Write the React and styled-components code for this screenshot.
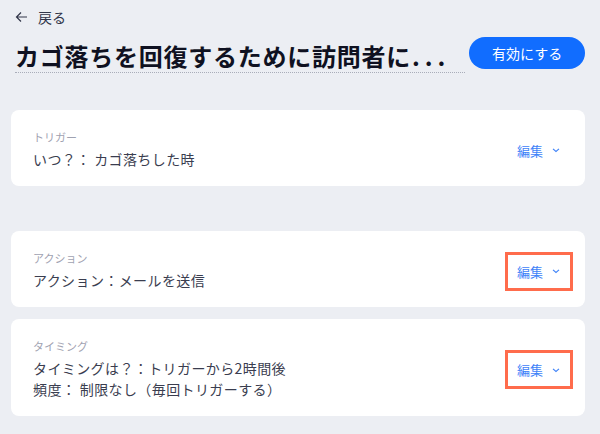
import React from "react";
import styled, { createGlobalStyle } from "styled-components";

const GlobalStyle = createGlobalStyle`
  html, body {
    margin: 0;
    padding: 0;
    background: #eceef3;
  }
  body {
    font-family: "Noto Sans CJK JP", "Noto Sans", sans-serif;
    color: #32364a;
  }
`;

const Page = styled.div`
  width: 600px;
  height: 434px;
  box-sizing: border-box;
  padding: 0 15px 0 11px;
  background: #eceef3;
  overflow: hidden;
`;

const Header = styled.header`
  padding-left: 4px;
`;

const BackLink = styled.a`
  display: inline-flex;
  align-items: center;
  gap: 10px;
  margin-top: 7px;
  height: 20px;
  font-size: 14px;
  color: #32364a;
  text-decoration: none;
  cursor: pointer;
`;

const TitleRow = styled.div`
  display: flex;
  align-items: flex-start;
  gap: 4px;
  margin-top: 9px;
`;

const Title = styled.h1`
  width: 451px;
  margin: 4px 0 0;
  padding-bottom: 1px;
  font-size: 24px;
  line-height: 30px;
  font-weight: 700;
  letter-spacing: 0.75px;
  color: #0f1121;
  white-space: nowrap;
  border-bottom: 1px dotted #a9adb9;
`;

const Dots = styled.span`
  letter-spacing: 5px;
  margin-left: 1px;
`;

const PrimaryButton = styled.button`
  width: 116px;
  height: 32px;
  border: none;
  border-radius: 16px;
  background: #116dff;
  color: #ffffff;
  font-family: inherit;
  font-size: 14px;
  cursor: pointer;
`;

const Section = styled.section`
  display: flex;
  flex-direction: column;
  gap: 12px;
  margin-top: ${(p) => p.$top}px;
`;

const Card = styled.div`
  display: flex;
  align-items: center;
  justify-content: space-between;
  background: #ffffff;
  border-radius: 8px;
  padding: 20px 15px 16px 22px;
`;

const Label = styled.div`
  font-size: 11px;
  line-height: 15px;
  color: #9fa2b1;
`;

const Lines = styled.div`
  margin-top: 4px;
`;

const Line = styled.div`
  font-size: 14px;
  line-height: 21px;
  letter-spacing: 0.4px;
  color: #3a3d4f;
`;

const EditButton = styled.button`
  display: flex;
  align-items: center;
  gap: 8px;
  height: 33px;
  padding: 0 9px;
  border: none;
  background: transparent;
  color: #3f83f8;
  font-family: inherit;
  font-size: 13px;
  cursor: pointer;
  outline: ${(p) => (p.$highlight ? "3px solid #ff6c4c" : "none")};
`;

const ArrowLeft = () => (
  <svg width="13" height="12" viewBox="0 0 13 12" fill="none">
    <path d="M12 6H1.5M6 1.5L1.5 6L6 10.5" stroke="#32364a" strokeWidth="1.2" />
  </svg>
);

const Chevron = () => (
  <svg width="10" height="10" viewBox="0 0 10 10" fill="none">
    <path d="M2 3.8L5 6.5L8 3.8" stroke="#3f83f8" strokeWidth="1.1" />
  </svg>
);

const StepCard = ({ label, lines, highlight }) => (
  <Card>
    <div>
      <Label>{label}</Label>
      <Lines>
        {lines.map((l) => (
          <Line key={l}>{l}</Line>
        ))}
      </Lines>
    </div>
    <EditButton $highlight={highlight}>
      編集
      <Chevron />
    </EditButton>
  </Card>
);

export default function App() {
  return (
    <>
      <GlobalStyle />
      <Page>
        <Header>
          <BackLink>
            <ArrowLeft />
            戻る
          </BackLink>
          <TitleRow>
            <Title>
              カゴ落ちを回復するために訪問者に<Dots>...</Dots>
            </Title>
            <PrimaryButton>有効にする</PrimaryButton>
          </TitleRow>
        </Header>

        <Section $top={37}>
          <StepCard label="トリガー" lines={["いつ？： カゴ落ちした時"]} />
        </Section>

        <Section $top={45}>
          <StepCard
            label="アクション"
            lines={["アクション：メールを送信"]}
            highlight
          />
          <StepCard
            label="タイミング"
            lines={[
              "タイミングは？：トリガーから2時間後",
              "頻度： 制限なし（毎回トリガーする）",
            ]}
            highlight
          />
        </Section>
      </Page>
    </>
  );
}
